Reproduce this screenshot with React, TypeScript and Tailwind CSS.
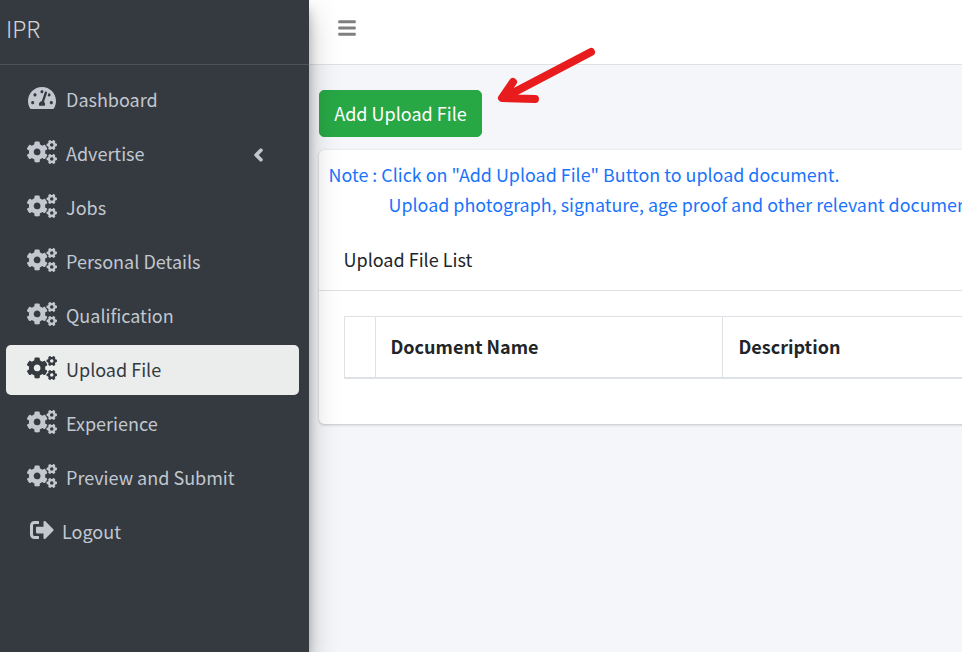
import { FaCogs, FaTachometerAlt, FaSignOutAlt, FaChevronLeft, FaBars } from "react-icons/fa";

const font = { fontFamily: '"Noto Sans CJK SC", "Noto Sans", sans-serif' };

const items = ["Advertise", "Jobs", "Personal Details", "Qualification", "Upload File", "Experience", "Preview and Submit"];

export default function App() {
  return (
    <div className="flex w-[962px] h-[652px] overflow-hidden bg-[#f4f6f9] text-[18px] text-[#212529] relative" style={font}>
      <aside className="w-[309px] shrink-0 bg-[#343a40] z-10 shadow-[0_14px_28px_rgba(0,0,0,0.25),0_10px_10px_rgba(0,0,0,0.22)]">
        <div className="h-[65px] border-b border-[#4b545c] pl-[6px] pt-[10px] text-[23px] font-light leading-[36px] text-[rgba(255,255,255,0.8)]">IPR</div>
        <nav className="pt-[10px] pl-[6px] pr-[10px] flex flex-col gap-[4px]">
          <a className="h-[50px] flex items-center pl-[22px] text-[#c2c7d0] relative">
            <FaTachometerAlt className="w-[28px] h-[28px] shrink-0 -mt-[4px]" />
            <span className="ml-[10px] -mt-[2px]">Dashboard</span>
          </a>
          {items.map((t) => {
            const active = t === "Upload File";
            return (
              <a key={t} className={active ? "h-[50px] flex items-center pl-[21px] rounded-[5px] bg-[#ebecec] text-[#343a40]" : "h-[50px] flex items-center pl-[21px] text-[#c2c7d0] relative"}>
                <FaCogs className="w-[30px] h-[30px] shrink-0 -mt-[5px]" />
                <span className="ml-[9px] -mt-[2px]">{t}</span>
                {t === "Advertise" && <FaChevronLeft stroke="currentColor" strokeWidth={50} className="absolute left-[246px] top-[19px] w-[13px] h-[14px]" />}
              </a>
            );
          })}
          <a className="h-[50px] flex items-center pl-[24px] text-[#c2c7d0]">
            <FaSignOutAlt className="w-[24px] h-[24px] shrink-0 -mt-[4px]" />
            <span className="ml-[8px] -mt-[2px]">Logout</span>
          </a>
        </nav>
      </aside>
      <main className="flex-1 min-w-0 relative">
        <header className="h-[65px] bg-white border-b border-[#dee2e6] flex items-center pl-[29px]">
          <FaBars className="w-[18px] h-[20px] text-[rgba(0,0,0,0.5)] -mt-[8px]" />
        </header>
        <div className="pt-[25px] pl-[10px] w-[900px]">
          <button className="h-[47px] w-[163px] bg-[#28a745] rounded-[5px] text-white text-[18px] border border-[#28a745]">Add Upload File</button>
          <section className="mt-[13px] bg-white rounded-[5px] shadow-[0_0_1px_rgba(0,0,0,0.125),0_1px_3px_rgba(0,0,0,0.2)] h-[274px]">
            <div className="pl-[9.5px] pt-[9px] text-[#1a73fb] text-[17.9px] leading-[30px] whitespace-nowrap">
              <p>Note : Click on "Add Upload File" Button to upload document.</p>
              <p className="pl-[60px]">Upload photograph, signature, age proof and other relevant documents.</p>
            </div>
            <div className="h-[59px] mt-[13px] border-b border-[#dee2e6] pl-[24.5px] pb-[4px] flex items-center text-[#212529]">
              <span>Upload File List</span>
            </div>
            <div className="pl-[25px] pt-[25px]">
              <div className="flex h-[63px] w-[800px] border border-b-2 border-[#dee2e6] font-bold text-[#212529]">
                <div className="w-[31px] border-r border-[#dee2e6]" />
                <div className="w-[347px] border-r border-[#dee2e6] pl-[14.5px] pb-[2px] flex items-center">Document Name</div>
                <div className="flex-1 pl-[15.5px] pb-[2px] flex items-center">Description</div>
              </div>
            </div>
          </section>
        </div>
        <svg className="absolute left-[180px] top-[40px]" width="120" height="70" viewBox="0 0 120 70" fill="none">
          <path d="M102 12 L16 57 M24 42 L13 58 L46 59" stroke="#e81c1c" strokeWidth="8" strokeLinecap="round" strokeLinejoin="round" />
        </svg>
      </main>
    </div>
  );
}
